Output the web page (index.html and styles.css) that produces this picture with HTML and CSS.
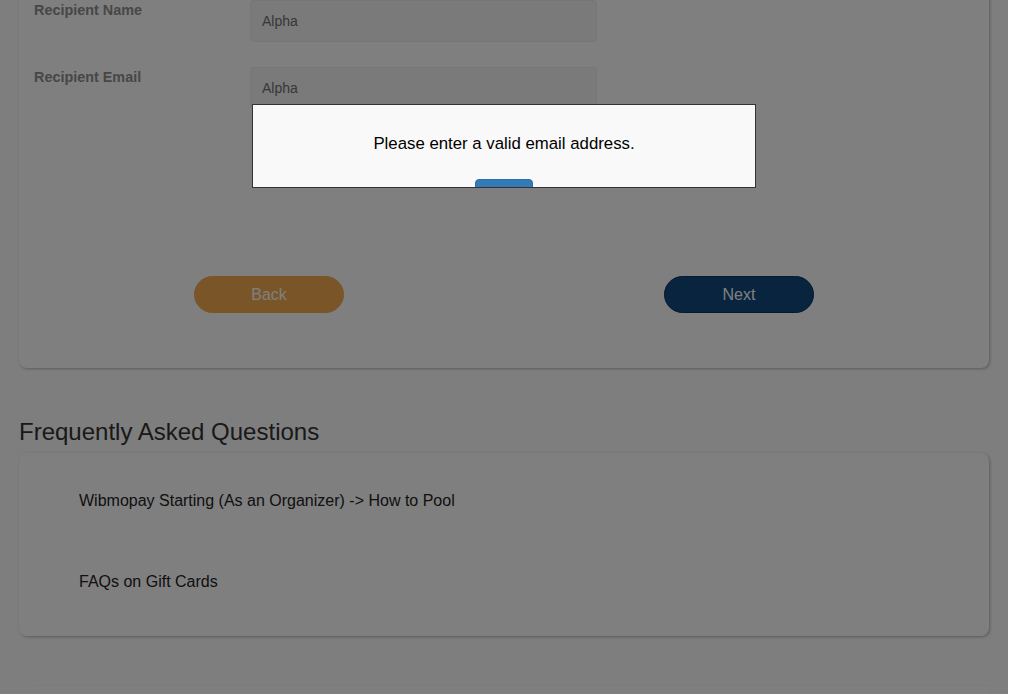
FILE: index.html
```html
<!DOCTYPE html>
<html lang="en">
<head>
<meta charset="utf-8">
<title>Gift Card - Recipient</title>
<link rel="stylesheet" href="styles.css">
</head>
<body>
<div class="page">
  <div class="card form-card">
    <div class="field-row">
      <label class="field-label">Recipient Name</label>
      <div class="field-input">Alpha</div>
    </div>
    <div class="field-row">
      <label class="field-label">Recipient Email</label>
      <div class="field-input">Alpha</div>
    </div>
    <div class="actions">
      <div class="action-col"><button class="btn btn-back">Back</button></div>
      <div class="action-col"><button class="btn btn-next">Next</button></div>
    </div>
  </div>

  <h2 class="faq-title">Frequently Asked Questions</h2>
  <div class="card faq-card">
    <div class="faq-item">Wibmopay Starting (As an Organizer) -&gt; How to Pool</div>
    <div class="faq-item">FAQs on Gift Cards</div>
  </div>
  <div class="footer-box"></div>
</div>

<div class="overlay">
  <div class="dialog">
    <p class="dialog-text">Please enter a valid email address.</p>
    <div class="dialog-actions"><button class="dialog-ok">OK</button></div>
  </div>
</div>
</body>
</html>
```

FILE: styles.css
```css
html, body {
  margin: 0;
  padding: 0;
  height: 100%;
  overflow: hidden;
}
body {
  background: #ffffff;
  font-family: "Liberation Sans", Arial, sans-serif;
}
.page {
  width: 1008px;
  box-sizing: border-box;
  padding: 0 19px;
  background: #fcfcfc;
  min-height: 100%;
}
.card {
  background: #ffffff;
  border-radius: 8px;
  box-shadow: 1px 1px 3px rgba(0, 0, 0, 0.28);
}
.form-card {
  margin-top: -15px;
  padding: 15px 15px 55px;
}
.field-row {
  display: flex;
  align-items: flex-start;
  margin-bottom: 25px;
}
.field-label {
  width: 216px;
  font-size: 14.4px;
  line-height: 20px;
  font-weight: bold;
  color: #8e8e8e;
}
.field-input {
  width: 347px;
  height: 42px;
  box-sizing: border-box;
  padding: 0 11px;
  background: #f4f4f4;
  border: 1px solid #ececec;
  border-radius: 4px;
  font-size: 14px;
  line-height: 40px;
  color: #707070;
}
.actions {
  display: flex;
  margin-top: 167px;
}
.action-col {
  flex: 1;
  display: flex;
  justify-content: center;
}
.btn {
  width: 150px;
  height: 37px;
  border-radius: 19px;
  font-family: "Liberation Sans", Arial, sans-serif;
  font-size: 16px;
  color: #ffffff;
  border: 1px solid transparent;
  padding: 0;
}
.btn-back {
  background: #f4aa50;
  border-color: #f4aa50;
}
.btn-next {
  background: #10487f;
  border-color: #0a3460;
}
.faq-title {
  margin: 50px 0 7px;
  font-size: 24px;
  line-height: 28px;
  font-weight: normal;
  color: #333333;
}
.faq-card {
  padding: 38px 60px 44px;
  display: flex;
  flex-direction: column;
  gap: 61px;
}
.faq-item {
  font-size: 16px;
  line-height: 20px;
  color: #222222;
}
.footer-box {
  margin: 49px 0 0 16px;
  height: 40px;
  background: #ffffff;
  border-top: 1px solid #f6f6f6;
}
.overlay {
  position: fixed;
  top: 0;
  left: 0;
  width: 1008px;
  height: 100%;
  background: rgba(0, 0, 0, 0.5);
}
.dialog {
  position: absolute;
  top: 104px;
  left: 252px;
  width: 504px;
  height: 84px;
  box-sizing: border-box;
  background: #f9f9f9;
  border: 1px solid #333333;
  overflow: hidden;
  text-align: center;
}
.dialog-text {
  margin: 29px 0 0;
  font-size: 16.8px;
  line-height: 20px;
  color: #000000;
}
.dialog-actions {
  margin-top: 25px;
  display: flex;
  justify-content: center;
}
.dialog-ok {
  width: 58px;
  height: 34px;
  background: #337ab7;
  border: 1px solid #2e6da4;
  border-radius: 4px;
  color: #ffffff;
  font-family: "Liberation Sans", Arial, sans-serif;
  font-size: 14px;
  padding: 0;
}
```
